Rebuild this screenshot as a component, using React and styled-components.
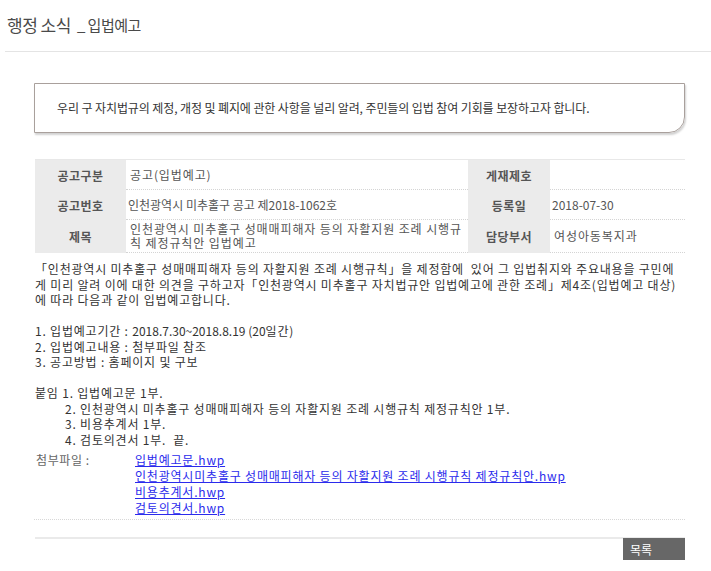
import React from "react";
import styled, { createGlobalStyle } from "styled-components";

const Global = createGlobalStyle`
  html, body { margin: 0; padding: 0; background: #fff; }
  body { font-family: "Noto Sans CJK KR", "Liberation Sans", sans-serif; color: #333; }
`;

const Page = styled.div`
  width: 711px;
  padding-left: 5px;
  box-sizing: border-box;
`;

const Header = styled.div`
  height: 52px;
  box-sizing: border-box;
  border-bottom: 1px solid #e4e4e4;
  display: flex;
  align-items: center;
  padding: 0 0 3px 2px;
  gap: 6px;
`;

const Title = styled.h1`
  margin: 0;
  font-size: 17px;
  font-weight: 400;
  color: #4a4a4a;
  letter-spacing: -0.5px;
`;

const SubTitle = styled.span`
  font-size: 15px;
  color: #4a4a4a;
  letter-spacing: -0.5px;
`;

const Content = styled.div`
  margin-left: 29px;
  width: 651px;
`;

const Notice = styled.div`
  margin-top: 31px;
  height: 50px;
  box-sizing: border-box;
  border: 1px solid #a9a09c;
  border-bottom-right-radius: 16px;
  box-shadow: 1px 2px 2px rgba(0, 0, 0, 0.18);
  display: flex;
  align-items: center;
  padding: 0 0 1px 22px;
  font-size: 12px;
  color: #333;
  letter-spacing: -0.1px;
`;

const Table = styled.div`
  margin: 26px 0 0 1px;
  display: grid;
  grid-template-columns: 91px 342px 82px 135px;
  grid-template-rows: 30px 30px 33px;
  border-top: 1px solid #e8e8e8;
  font-size: 12px;
`;

const Label = styled.div`
  background: #ebebeb;
  color: #555;
  font-weight: 700;
  display: flex;
  align-items: center;
  justify-content: center;
  letter-spacing: 0.5px;
`;

const Value = styled.div`
  color: #555;
  display: flex;
  align-items: center;
  padding: 0 4px 0 ${(p) => (p.$spaced ? "4px" : "2px")};
  border-bottom: 1px dotted #d4d4d4;
  line-height: 14px;
  word-break: break-all;
  letter-spacing: ${(p) => (p.$spaced ? "0.9px" : "0")};
`;

const Body = styled.div`
  margin: 8px 0 0 1px;
  font-size: 12px;
  line-height: 15.5px;
  color: #333;
  letter-spacing: 0.8px;
`;

const Num = styled.span`
  letter-spacing: 0;
`;

const Line = styled.div`
  white-space: nowrap;
  min-height: 15.5px;
  padding-left: ${(p) => (p.$indent ? "30px" : "0")};
`;

const Attach = styled.div`
  margin-top: 5px;
  display: grid;
  grid-template-columns: 99px 1fr;
  padding-left: 2px;
  font-size: 12px;
  line-height: 16px;
  padding-bottom: 3px;
  border-bottom: 1px dotted #d8d8d8;
`;

const AttachLabel = styled.div`
  color: #666;
  letter-spacing: 0.6px;
`;

const Links = styled.div`
  display: flex;
  flex-direction: column;
  align-items: flex-start;
`;

const FileLink = styled.a`
  color: #2b2bec;
  text-decoration: underline;
  white-space: nowrap;
  letter-spacing: 0.8px;
`;

const Footer = styled.div`
  margin: 17px 0 0 1px;
  border-top: 2px solid #eaeaea;
  display: flex;
  justify-content: flex-end;
`;

const ListButton = styled.button`
  width: 62px;
  height: 22px;
  margin-top: -1px;
  border: 0;
  background: #676767;
  color: #fff;
  font-family: inherit;
  font-size: 12px;
  text-align: left;
  padding: 0 0 0 7px;
  cursor: pointer;
`;

export default function App() {
  return (
    <Page>
      <Global />
      <Header>
        <Title>행정 소식</Title>
        <SubTitle>_ 입법예고</SubTitle>
      </Header>
      <Content>
        <Notice>
          우리 구 자치법규의 제정, 개정 및 폐지에 관한 사항을 널리 알려, 주민들의 입법 참여 기회를 보장하고자 합니다.
        </Notice>
        <Table>
          <Label>공고구분</Label>
          <Value $spaced>공고(입법예고)</Value>
          <Label>게재제호</Label>
          <Value></Value>
          <Label>공고번호</Label>
          <Value>인천광역시 미추홀구 공고 제2018-1062호</Value>
          <Label>등록일</Label>
          <Value>2018-07-30</Value>
          <Label>제목</Label>
          <Value $spaced>인천광역시 미추홀구 성매매피해자 등의 자활지원 조례 시행규칙 제정규칙안 입법예고</Value>
          <Label>담당부서</Label>
          <Value $spaced>여성아동복지과</Value>
        </Table>
        <Body>
          <Line>「인천광역시 미추홀구 성매매피해자 등의 자활지원 조례 시행규칙」을 제정함에 &nbsp;있어 그 입법취지와 주요내용을 구민에</Line>
          <Line>게 미리 알려 이에 대한 의견을 구하고자「인천광역시 미추홀구 자치법규안 입법예고에 관한 조례」제4조(입법예고 대상)</Line>
          <Line>에 따라 다음과 같이 입법예고합니다.</Line>
          <Line />
          <Line>1. 입법예고기간 : <Num>2018.7.30~2018.8.19 (20</Num>일간)</Line>
          <Line>2. 입법예고내용 : 첨부파일 참조</Line>
          <Line>3. 공고방법 : 홈페이지 및 구보</Line>
          <Line />
          <Line>붙임 1. 입법예고문 1부.</Line>
          <Line $indent>2. 인천광역시 미추홀구 성매매피해자 등의 자활지원 조례 시행규칙 제정규칙안 1부.</Line>
          <Line $indent>3. 비용추계서 1부.</Line>
          <Line $indent>4. 검토의견서 1부. &nbsp;끝.</Line>
        </Body>
        <Attach>
          <AttachLabel>첨부파일 :</AttachLabel>
          <Links>
            <FileLink href="#">입법예고문.hwp</FileLink>
            <FileLink href="#">인천광역시미추홀구 성매매피해자 등의 자활지원 조례 시행규칙 제정규칙안.hwp</FileLink>
            <FileLink href="#">비용추계서.hwp</FileLink>
            <FileLink href="#">검토의견서.hwp</FileLink>
          </Links>
        </Attach>
        <Footer>
          <ListButton>목록</ListButton>
        </Footer>
      </Content>
    </Page>
  );
}
